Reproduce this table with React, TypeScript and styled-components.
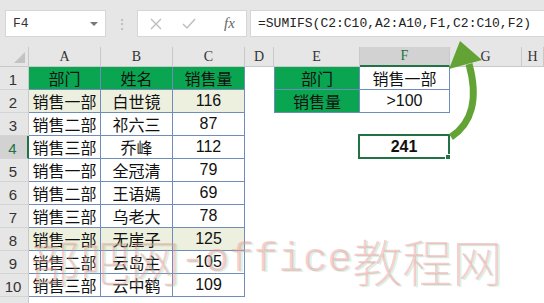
import styled, { createGlobalStyle } from "styled-components";

const GlobalStyle = createGlobalStyle`
  html, body {
    margin: 0;
    padding: 0;
    background: #fff;
  }
  body {
    width: 544px;
    height: 303px;
    overflow: hidden;
    font-family: "Liberation Sans", "Noto Sans CJK SC", sans-serif;
  }
`;

const Sheet = styled.div`
  position: relative;
  width: 544px;
  height: 303px;
  overflow: hidden;
  background: #fff;
`;

const Toolbar = styled.div`
  height: 47px;
  box-sizing: border-box;
  padding: 10px 0 0 5px;
  background: #e6e6e6;
  display: flex;
  align-items: flex-start;
`;

const NameBox = styled.div`
  width: 101px;
  height: 27px;
  box-sizing: border-box;
  padding: 0 7px 0 7px;
  background: #fff;
  border: 1px solid #d6d6d6;
  display: flex;
  align-items: center;
  justify-content: space-between;
  font-family: "Liberation Mono", monospace;
  font-size: 13px;
  color: #333;
`;

const DropArrow = styled.span`
  width: 0;
  height: 0;
  border-left: 4px solid transparent;
  border-right: 4px solid transparent;
  border-top: 4px solid #777;
`;

const Grip = styled.div`
  width: 31px;
  height: 27px;
  display: flex;
  align-items: center;
  justify-content: center;
  color: #b5b5b5;
  font-size: 14px;
`;

const FxBox = styled.div`
  width: 110px;
  height: 27px;
  box-sizing: border-box;
  background: #fff;
  border: 1px solid #d6d6d6;
  display: flex;
  align-items: center;
  padding-left: 12px;
  gap: 20px;
  color: #bdbdbd;
`;

const FxLabel = styled.span`
  font-family: "Liberation Serif", serif;
  font-style: italic;
  font-size: 15px;
  color: #666;
  margin-left: 8px;
`;

const FormulaBox = styled.div`
  flex: 1;
  height: 27px;
  margin-left: 3px;
  box-sizing: border-box;
  background: #fff;
  border: 1px solid #d6d6d6;
  border-right: none;
  display: flex;
  align-items: center;
  padding-left: 7px;
  font-family: "Liberation Mono", monospace;
  font-size: 13px;
  color: #222;
  white-space: nowrap;
  overflow: hidden;
`;

const Grid = styled.div`
  display: grid;
  grid-template-columns: 29px 72px 72px 72px 29px 86px 90px 72px 22px;
  grid-template-rows: 20px repeat(11, 23px);
`;

const ColHead = styled.div<{ $active?: boolean }>`
  box-sizing: border-box;
  background: ${(p) => (p.$active ? "#d2d2d2" : "#e6e6e6")};
  border-right: 1px solid #c9c9c9;
  border-bottom: ${(p) => (p.$active ? "2px solid #217346" : "1px solid #c9c9c9")};
  display: flex;
  align-items: center;
  justify-content: center;
  font-family: "Liberation Serif", serif;
  font-size: 14px;
  color: ${(p) => (p.$active ? "#217346" : "#333")};
`;

const Corner = styled.div`
  box-sizing: border-box;
  background: #e6e6e6;
  border-right: 1px solid #c9c9c9;
  border-bottom: 1px solid #c9c9c9;
  display: flex;
  align-items: flex-end;
  justify-content: flex-end;
  padding: 0 3px 3px 0;
`;

const CornerMark = styled.span`
  width: 0;
  height: 0;
  border-left: 11px solid transparent;
  border-bottom: 11px solid #c3c3c3;
`;

const RowHead = styled.div<{ $active?: boolean }>`
  box-sizing: border-box;
  background: ${(p) => (p.$active ? "#d2d2d2" : "#e6e6e6")};
  border-right: ${(p) => (p.$active ? "2px solid #217346" : "1px solid #c9c9c9")};
  border-bottom: 1px solid #d4d4d4;
  display: flex;
  align-items: flex-end;
  justify-content: center;
  padding: 0 2px 1px 0;
  font-family: "Liberation Sans", sans-serif;
  font-size: 15px;
  color: ${(p) => (p.$active ? "#217346" : "#333")};
`;

const Cell = styled.div<{ $fill?: string; $lined?: boolean; $left?: boolean; $bold?: boolean }>`
  position: relative;
  box-sizing: border-box;
  background: ${(p) => p.$fill || "#fff"};
  border-right: ${(p) => (p.$lined ? "1px solid #6f8cba" : "none")};
  border-bottom: ${(p) => (p.$lined ? "1px solid #6f8cba" : "none")};
  border-left: ${(p) => (p.$left ? "1px solid #6f8cba" : "none")};
  display: flex;
  align-items: center;
  justify-content: center;
  font-family: "Liberation Sans", "Noto Sans CJK SC", sans-serif;
  font-size: 16px;
  font-weight: ${(p) => (p.$bold ? 700 : 400)};
  color: #111;
  white-space: nowrap;
`;

const Selected = styled(Cell)`
  border: none;
  box-shadow: inset 0 0 0 2px #217346;
  margin: -2px 0 0 -2px;
`;

const Handle = styled.span`
  position: absolute;
  right: -3px;
  bottom: -3px;
  width: 6px;
  height: 6px;
  background: #217346;
  border: 1px solid #fff;
`;

const Watermark = styled.div`
  position: absolute;
  left: 30px;
  top: 231px;
  display: flex;
  align-items: center;
  pointer-events: none;
  color: rgba(238, 140, 140, 0.42);
  text-shadow: 2px 1px 0 rgba(140, 210, 170, 0.3);
  white-space: nowrap;
`;

const MarkCjk = styled.span`
  font-family: "Noto Sans CJK SC", sans-serif;
  font-size: 50px;
  line-height: 58px;
  font-weight: 300;
`;

const MarkLatin = styled.span`
  font-family: "Liberation Mono", monospace;
  font-size: 41px;
  line-height: 58px;
`;

const Overlay = styled.svg`
  position: absolute;
  left: 0;
  top: 0;
  pointer-events: none;
`;

const GREEN = "#0aa550";
const PALE = "#edf0de";

const rows: [string, string, number][] = [
  ["销售一部", "白世镜", 116],
  ["销售二部", "祁六三", 87],
  ["销售三部", "乔峰", 112],
  ["销售一部", "全冠清", 79],
  ["销售二部", "王语嫣", 69],
  ["销售三部", "乌老大", 78],
  ["销售一部", "无崖子", 125],
  ["销售二部", "云岛主", 105],
  ["销售三部", "云中鹤", 109],
];

const cols = ["A", "B", "C", "D", "E", "F", "G", "H"];

export default function App() {
  const body = [];
  for (let r = 1; r <= 11; r++) {
    body.push(
      <RowHead key={`h${r}`} $active={r === 4}>
        {r}
      </RowHead>
    );
    if (r === 1) {
      body.push(<Cell key="a1" $fill={GREEN} $lined>部门</Cell>);
      body.push(<Cell key="b1" $fill={GREEN} $lined>姓名</Cell>);
      body.push(<Cell key="c1" $fill={GREEN} $lined>销售量</Cell>);
    } else if (r <= 10) {
      const [dept, name, qty] = rows[r - 2];
      const fill = dept === "销售一部" && qty > 100 ? PALE : "#fff";
      body.push(<Cell key={`a${r}`} $fill={fill} $lined>{dept}</Cell>);
      body.push(<Cell key={`b${r}`} $fill={fill} $lined>{name}</Cell>);
      body.push(<Cell key={`c${r}`} $fill={fill} $lined>{qty}</Cell>);
    } else {
      body.push(<Cell key={`a${r}`} />, <Cell key={`b${r}`} />, <Cell key={`c${r}`} />);
    }
    body.push(<Cell key={`d${r}`} />);
    if (r === 1) {
      body.push(<Cell key="e1" $fill={GREEN} $lined $left>部门</Cell>);
      body.push(<Cell key="f1" $lined>销售一部</Cell>);
    } else if (r === 2) {
      body.push(<Cell key="e2" $fill={GREEN} $lined $left>销售量</Cell>);
      body.push(<Cell key="f2" $lined>&gt;100</Cell>);
    } else if (r === 4) {
      body.push(<Cell key="e4" />);
      body.push(
        <Selected key="f4" $bold>
          241
          <Handle />
        </Selected>
      );
    } else {
      body.push(<Cell key={`e${r}`} />, <Cell key={`f${r}`} />);
    }
    body.push(<Cell key={`g${r}`} />, <Cell key={`h${r}x`} />);
  }

  return (
    <Sheet>
      <GlobalStyle />
      <Toolbar>
        <NameBox>
          F4
          <DropArrow />
        </NameBox>
        <Grip>⋮</Grip>
        <FxBox>
          <svg width="12" height="12" viewBox="0 0 12 12">
            <path d="M1 1 L11 11 M11 1 L1 11" stroke="#bdbdbd" strokeWidth="1.4" fill="none" />
          </svg>
          <svg width="14" height="12" viewBox="0 0 14 12">
            <path d="M1 6 L5 10 L13 1" stroke="#bdbdbd" strokeWidth="1.4" fill="none" />
          </svg>
          <FxLabel>fx</FxLabel>
        </FxBox>
        <FormulaBox>=SUMIFS(C2:C10,A2:A10,F1,C2:C10,F2)</FormulaBox>
      </Toolbar>
      <Grid>
        <Corner>
          <CornerMark />
        </Corner>
        {cols.map((c) => (
          <ColHead key={c} $active={c === "F"}>
            {c}
          </ColHead>
        ))}
        {body}
      </Grid>
      <Watermark>
        <MarkCjk>部吧网</MarkCjk>
        <MarkLatin>-office</MarkLatin>
        <MarkCjk>教程网</MarkCjk>
      </Watermark>
      <Overlay width="544" height="303" viewBox="0 0 544 303">
        <path
          d="M451 137 C471 124 479 100 469 64"
          stroke="#63a336"
          strokeWidth="7"
          fill="none"
          strokeLinecap="butt"
        />
        <polygon points="460,41 449,69 482,60" fill="#63a336" />
      </Overlay>
    </Sheet>
  );
}
